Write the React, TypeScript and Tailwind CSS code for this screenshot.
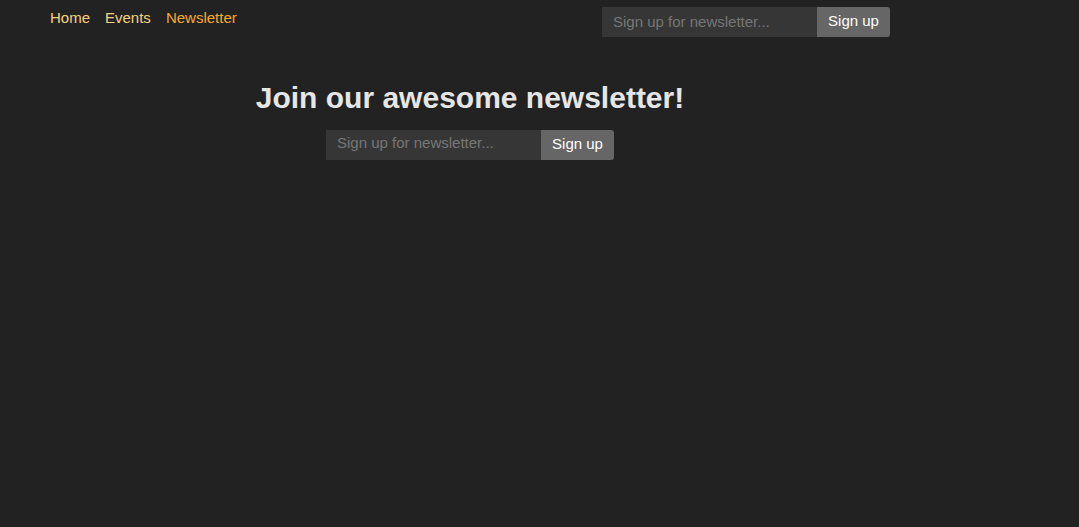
import React from "react";

function SignupForm({ lift }: { lift: "sm" | "md" }) {
  const inputPb = lift === "sm" ? "pb-[2px]" : "pb-[5px]";
  const btnPb = "pb-[2px]";
  return (
    <form className="flex h-[30px]" onSubmit={(e) => e.preventDefault()}>
      <input
        type="text"
        placeholder="Sign up for newsletter..."
        className={`w-[215px] h-[30px] bg-[#363636] px-[11px] ${inputPb} text-[15px] text-[#ddd] placeholder:text-[#777] outline-none border-0`}
      />
      <button
        type="submit"
        className={`w-[73px] h-[30px] bg-[#666666] text-white text-[15px] rounded-r-[3px] border-0 ${btnPb}`}
      >
        Sign up
      </button>
    </form>
  );
}

export default function App() {
  return (
    <div
      className="min-h-[527px] w-full bg-[#222222]"
      style={{ fontFamily: '"Liberation Sans", Arial, sans-serif' }}
    >
      <div className="w-[940px]">
        <header className="flex justify-between px-[50px]">
          <nav className="flex gap-[15px] pt-[8px] text-[15px] leading-[20px]">
            <a className="text-[#f5d27d]">Home</a>
            <a className="text-[#f5d27d]">Events</a>
            <a className="text-[#f7a928]">Newsletter</a>
          </nav>
          <div className="pt-[7px]">
            <SignupForm lift="sm" />
          </div>
        </header>
        <main className="flex flex-col items-center pt-[43px]">
          <h1 className="text-[30px] font-bold leading-[36px] text-[#e6e6e6]">
            Join our awesome newsletter!
          </h1>
          <div className="mt-[14px]">
            <SignupForm lift="md" />
          </div>
        </main>
      </div>
    </div>
  );
}
